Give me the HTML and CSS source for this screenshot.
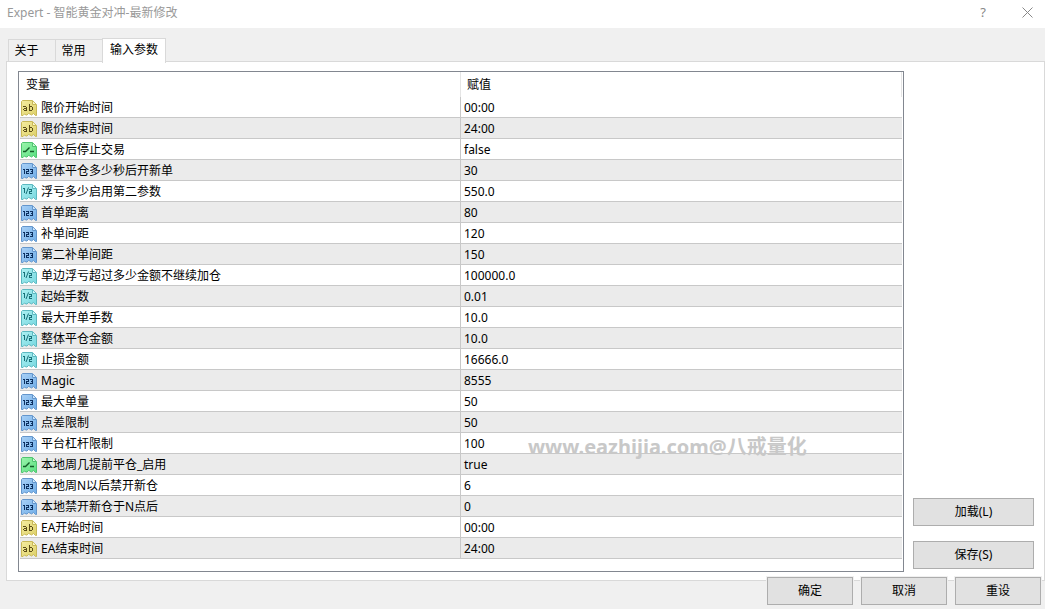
FILE: index.html
```html
<!DOCTYPE html>
<html lang="zh-CN">
<head>
  <meta charset="UTF-8">
  <meta name="viewport" content="width=device-width, initial-scale=1.0">
  <title>Expert - 智能黄金对冲-最新修改</title>
  <link rel="stylesheet" href="styles.css">
</head>
<body>
  <!-- icons shared by the table rows -->
  <svg class="sprite" aria-hidden="true">
    <defs>
      <linearGradient id="g-ab" x1="0" y1="0" x2="1" y2="1"><stop offset="0" stop-color="#f4eca0"/><stop offset="1" stop-color="#ddd068"/></linearGradient>
      <linearGradient id="g-bool" x1="0" y1="0" x2="1" y2="1"><stop offset="0" stop-color="#9cf4ac"/><stop offset="1" stop-color="#58e080"/></linearGradient>
      <linearGradient id="g-int" x1="0" y1="0" x2="1" y2="1"><stop offset="0" stop-color="#a8d0f6"/><stop offset="1" stop-color="#70aee8"/></linearGradient>
      <linearGradient id="g-real" x1="0" y1="0" x2="1" y2="1"><stop offset="0" stop-color="#acf0f2"/><stop offset="1" stop-color="#78d8e0"/></linearGradient>
      <path id="tag" d="M1.5.5H11.5L15.5 4.5V15.5H14.5L12.5 13.5L10.5 15L9 14L7.5 13.5L6 15H5L3.5 14L2 15.5H.5V1.5Z"/>
    </defs>
    <symbol id="ab" viewBox="0 0 16 16">
      <use href="#tag" fill="url(#g-ab)" stroke="#c8b858"/>
      <path d="M11.5 1V4.5H15" fill="#fcf8cc" stroke="#c8b858"/>
      <path d="M2 6H5V7H2ZM5 7H6V11H3V10H5V9H3V8H5ZM2 9H3V10H2ZM8 4H9V6H11V7H9V10H11V11H8ZM11 7H12V10H11Z" fill="#5a4c18" shape-rendering="crispEdges"/>
    </symbol>
    <symbol id="bool" viewBox="0 0 16 16">
      <use href="#tag" fill="url(#g-bool)" stroke="#50c470"/>
      <path d="M11.5 1V4.5H15" fill="#ccfcd4" stroke="#50c470"/>
      <path d="M2 9.5H4.5L8.5 5.5M9 9.5H13" fill="none" stroke="#145c28" stroke-width="1.4"/>
    </symbol>
    <symbol id="int" viewBox="0 0 16 16">
      <use href="#tag" fill="url(#g-int)" stroke="#6496cc"/>
      <path d="M11.5 1V4.5H15" fill="#d0e8fc" stroke="#6496cc"/>
      <path d="M2 6H4V11H3V7H2ZM5 6H8V9H6V10H8V11H5V8H7V7H5ZM9 6H12V11H9V10H11V9H10V8H11V7H9Z" fill="#0c3060" shape-rendering="crispEdges"/>
    </symbol>
    <symbol id="real" viewBox="0 0 16 16">
      <use href="#tag" fill="url(#g-real)" stroke="#5cb8c0"/>
      <path d="M11.5 1V4.5H15" fill="#d4fafc" stroke="#5cb8c0"/>
      <path d="M2 4H4V9H3V5H2ZM8 5H11V8H9V9H11V10H8V7H10V6H8Z" fill="#187078" shape-rendering="crispEdges"/>
      <path d="M5 10L7.5 3.5" stroke="#187078"/>
    </symbol>
  </svg>

  <div class="dialog">
    <header class="titlebar">
      <h1>Expert - 智能黄金对冲-最新修改</h1>
      <button class="help" aria-label="帮助">?</button>
      <button class="close" aria-label="关闭">
        <svg width="11" height="11" viewBox="0 0 11 11"><path d="M.5.5L10.5 10.5M10.5.5L.5 10.5" stroke="#888" fill="none"/></svg>
      </button>
    </header>

    <div class="tabs" role="tablist">
      <button class="tab" role="tab">关于</button>
      <button class="tab" role="tab">常用</button>
      <button class="tab active" role="tab" aria-selected="true">输入参数</button>
    </div>

    <main class="panel">
      <div class="list">
        <table>
          <thead>
            <tr><th>变量</th><th>赋值</th></tr>
          </thead>
          <tbody>
            <tr><td><svg class="icon"><use href="#ab"/></svg>限价开始时间</td><td>00:00</td></tr>
            <tr><td><svg class="icon"><use href="#ab"/></svg>限价结束时间</td><td>24:00</td></tr>
            <tr><td><svg class="icon"><use href="#bool"/></svg>平仓后停止交易</td><td>false</td></tr>
            <tr><td><svg class="icon"><use href="#int"/></svg>整体平仓多少秒后开新单</td><td>30</td></tr>
            <tr><td><svg class="icon"><use href="#real"/></svg>浮亏多少启用第二参数</td><td>550.0</td></tr>
            <tr><td><svg class="icon"><use href="#int"/></svg>首单距离</td><td>80</td></tr>
            <tr><td><svg class="icon"><use href="#int"/></svg>补单间距</td><td>120</td></tr>
            <tr><td><svg class="icon"><use href="#int"/></svg>第二补单间距</td><td>150</td></tr>
            <tr><td><svg class="icon"><use href="#real"/></svg>单边浮亏超过多少金额不继续加仓</td><td>100000.0</td></tr>
            <tr><td><svg class="icon"><use href="#real"/></svg>起始手数</td><td>0.01</td></tr>
            <tr><td><svg class="icon"><use href="#real"/></svg>最大开单手数</td><td>10.0</td></tr>
            <tr><td><svg class="icon"><use href="#real"/></svg>整体平仓金额</td><td>10.0</td></tr>
            <tr><td><svg class="icon"><use href="#real"/></svg>止损金额</td><td>16666.0</td></tr>
            <tr><td><svg class="icon"><use href="#int"/></svg>Magic</td><td>8555</td></tr>
            <tr><td><svg class="icon"><use href="#int"/></svg>最大单量</td><td>50</td></tr>
            <tr><td><svg class="icon"><use href="#int"/></svg>点差限制</td><td>50</td></tr>
            <tr><td><svg class="icon"><use href="#int"/></svg>平台杠杆限制</td><td>100</td></tr>
            <tr><td><svg class="icon"><use href="#bool"/></svg>本地周几提前平仓_启用</td><td>true</td></tr>
            <tr><td><svg class="icon"><use href="#int"/></svg>本地周N以后禁开新仓</td><td>6</td></tr>
            <tr><td><svg class="icon"><use href="#int"/></svg>本地禁开新仓于N点后</td><td>0</td></tr>
            <tr><td><svg class="icon"><use href="#ab"/></svg>EA开始时间</td><td>00:00</td></tr>
            <tr><td><svg class="icon"><use href="#ab"/></svg>EA结束时间</td><td>24:00</td></tr>
          </tbody>
        </table>
        <div class="watermark">www.eazhijia.com@八戒量化</div>
      </div>
      <div class="side">
        <button class="btn">加载(L)</button>
        <button class="btn">保存(S)</button>
      </div>
    </main>

    <footer class="actions">
      <button class="btn">确定</button>
      <button class="btn">取消</button>
      <button class="btn">重设</button>
    </footer>
  </div>
</body>
</html>
```

FILE: styles.css
```css
* {
  box-sizing: border-box;
}

body {
  margin: 0;
  font-family: 'Noto Sans', 'Noto Sans CJK SC', sans-serif;
  font-size: 12px;
  line-height: 20px;
  color: #000;
  background: #f0f0f0;
}

button {
  font: inherit;
  color: inherit;
  padding: 0;
}

.sprite {
  position: absolute;
  width: 0;
  height: 0;
}

.dialog {
  display: flex;
  flex-direction: column;
  min-height: 100vh;
}

/* title bar */
.titlebar {
  display: flex;
  align-items: center;
  height: 28px;
  padding: 0 12px 2px 7px;
  background: #fff;
  color: #999;
}

.titlebar h1 {
  flex: 1;
  margin: 0;
  font-size: 12px;
  font-weight: normal;
}

.titlebar button {
  display: flex;
  align-items: center;
  justify-content: center;
  height: 26px;
  padding-bottom: 2px;
  border: none;
  background: none;
}

.titlebar .help {
  width: 20px;
  margin-right: 29px;
  font-size: 13px;
  color: #888;
}

.close {
  width: 11px;
}

/* tabs */
.tabs {
  display: flex;
  align-items: flex-end;
  height: 34px;
  padding-left: 8px;
}

.tab {
  width: 47px;
  height: 23px;
  padding: 0 11px 0 0;
  border: 1px solid #d9d9d9;
  border-right: none;
  background: #f0f0f0;
}

.tab.active {
  position: relative;
  width: 64px;
  height: 25px;
  margin-bottom: -1px;
  padding: 0 0 3px;
  border-right: 1px solid #d9d9d9;
  border-bottom: none;
  background: #fff;
}

/* panel */
.panel {
  display: flex;
  gap: 9px;
  margin: -1px 0 0 6px;
  padding: 9px 10px 8px 11px;
  border: 1px solid #d9d9d9;
  background: #fff;
}

.list {
  position: relative;
  flex: 1;
  padding: 0 1px 12px;
  border: 1px solid #828790;
}

table {
  width: 100%;
  table-layout: fixed;
  border-collapse: separate;
  border-spacing: 0;
}

th,
td {
  padding: 0 0 0 3px;
  text-align: left;
  font-weight: normal;
}

th {
  height: 25px;
  padding-left: 6px;
  border-right: 1px solid #e5e5e5;
}

td {
  height: 21px;
  padding-top: 2px;
  border-bottom: 1px solid #c8c8c8;
  line-height: 18px;
}

th:first-child,
td:first-child {
  width: 50%;
  border-right: 1px solid #c8c8c8;
}

th:first-child {
  border-right-color: #e5e5e5;
}

td:first-child {
  padding-left: 1px;
}

tbody tr:nth-child(even) {
  background: #ebebeb;
}

.icon {
  width: 16px;
  height: 16px;
  margin: 1px 4px 0 0;
  vertical-align: top;
}

.watermark {
  position: absolute;
  left: 509px;
  bottom: 110px;
  font-size: 20px;
  font-weight: bold;
  line-height: 28px;
  color: #c8c8c8;
}

.side {
  display: flex;
  flex-direction: column;
  justify-content: flex-end;
  gap: 15px;
  width: 121px;
  padding-bottom: 3px;
}

.btn {
  height: 28px;
  border: 1px solid #adadad;
  background: #e1e1e1;
}

/* bottom buttons sit over the panel edge */
.actions {
  position: relative;
  display: flex;
  justify-content: flex-end;
  gap: 8px;
  margin-top: -4px;
  padding-right: 4px;
}

.actions .btn {
  width: 86px;
  outline: 1px solid #f0f0f0;
}
```
